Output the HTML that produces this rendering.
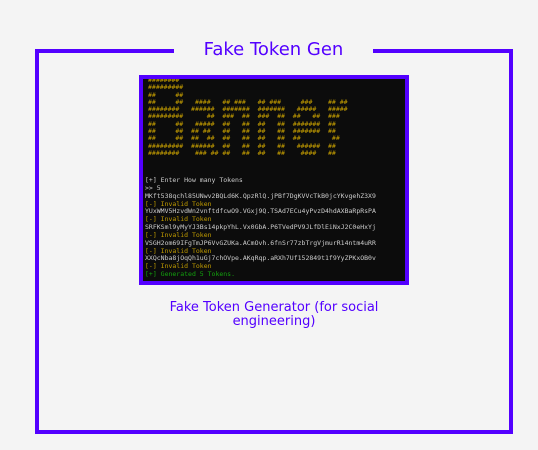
<!DOCTYPE html>
<html><head><meta charset="utf-8"><style>
html,body{margin:0;padding:0}
body{width:538px;height:450px;background:#f4f4f4;position:relative;overflow:hidden;font-family:"DejaVu Sans","Liberation Sans",sans-serif}
.box{position:absolute;left:35px;top:49px;width:470px;height:377px;border:4px solid #5300ff}
.title{position:absolute;left:174px;top:36px;width:199px;height:28px;background:#f4f4f4;color:#5300ff;font-size:18px;text-align:center;line-height:28px}
.img{position:absolute;left:139px;top:75px;width:262px;height:202px;border:4px solid #5300ff;background:#0c0c0c;overflow:hidden}
pre{margin:0;font-family:"DejaVu Sans Mono","Liberation Mono",monospace;font-size:6.5px;color:#cccccc;white-space:pre}
.art{position:absolute;left:5px;top:-2px;line-height:7.3px;color:#c8a000}
.log{position:absolute;left:2px;top:98px;line-height:7.85px}
.y{color:#c19c00}.g{color:#13a10e}
.cap{position:absolute;left:150px;top:301px;width:248px;text-align:center;color:#5300ff;font-size:13px;line-height:14px}
</style></head><body>
<div class="box"></div>
<div class="title">Fake Token Gen</div>
<div class="img">
<pre class="art">########
#########
##     ##
##     ##   ####   ## ###   ## ###     ###    ## ##
########   ######  #######  #######   #####   #####
#########      ##  ###  ##  ###  ##  ##   ##  ###
##     ##   #####  ##   ##  ##   ##  #######  ##
##     ##  ## ##   ##   ##  ##   ##  #######  ##
##     ##  ##  ##  ##   ##  ##   ##  ##        ##
#########  ######  ##   ##  ##   ##   ######  ##
########    ### ## ##   ##  ##   ##    ####   ##</pre>
<pre class="log">[+] Enter How many Tokens
&gt;&gt; 5
MKft538qchl85UNwv2BQLd6K.QpzRlQ.jPBf7DgKVVcTkB0jcYKvgehZ3X9
<span class="y">[-] Invalid Token</span>
YUxWMV5HzvdWn2vnftdfcwO9.VGxj9Q.TSAd7ECu4yPvzD4hdAXBaRpRsPA
<span class="y">[-] Invalid Token</span>
SRFKSml9yMyYJ3Bs14pkpYhL.Vx0GbA.P6TVedPV9JLfDlEiNxJ2C0eHxYj
<span class="y">[-] Invalid Token</span>
VSGH2om69IFgTmJP6VvGZUKa.ACmOvh.6fnSr77zbTrgVjmurR14ntm4uRR
<span class="y">[-] Invalid Token</span>
XXQcNba8jOqQh1uGj7chOVpe.AKqRqp.aRXh7Uf152849t1f9YyZPKxOB0v
<span class="y">[-] Invalid Token</span>
<span class="g">[+] Generated 5 Tokens.</span></pre>
</div>
<div class="cap">Fake Token Generator (for social engineering)</div>
</body></html>
